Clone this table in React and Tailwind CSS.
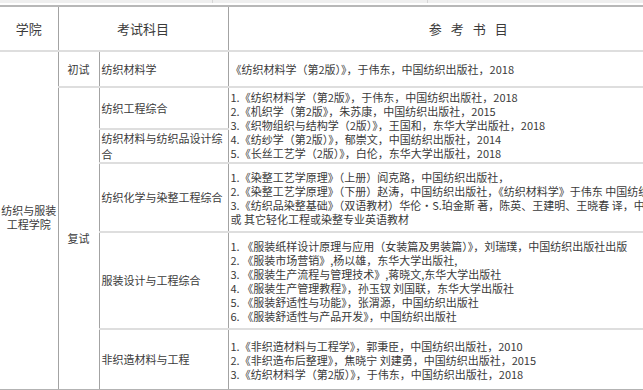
const font = { fontFamily: '"Noto Sans CJK SC", "Noto Sans", sans-serif' }

const refs = {
  first: ['《纺织材料学（第2版）》，于伟东，中国纺织出版社，2018'],
  textile: [
    '1.《纺织材料学（第2版》，于伟东，中国纺织出版社，2018',
    '2.《机织学（第2版》，朱苏康，中国纺织出版社，2015',
    '3.《织物组织与结构学（2版）》，王国和，东华大学出版社，2018',
    '4.《纺纱学（第2版）》，郁崇文，中国纺织出版社，2014',
    '5.《长丝工艺学（2版）》，白伦，东华大学出版社，2018',
  ],
  dyeing: [
    '1.《染整工艺学原理》（上册）阎克路，中国纺织出版社，',
    '2.《染整工艺学原理》（下册）赵涛，中国纺织出版社，《纺织材料学》于伟东 中国纺织出版社',
    '3.《纺织品染整基础》（双语教材）华伦·S.珀金斯 著，陈英、王建明、王晓春 译，中国纺织出版社',
    '或 其它轻化工程或染整专业英语教材',
  ],
  apparel: [
    '1. 《服装纸样设计原理与应用（女装篇及男装篇）》，刘瑞璞，中国纺织出版社出版',
    '2. 《服装市场营销》,杨以雄，东华大学出版社,',
    '3. 《服装生产流程与管理技术》,蒋晓文,东华大学出版社',
    '4. 《服装生产管理教程》，孙玉钗 刘国联，东华大学出版社',
    '5. 《服装舒适性与功能》，张渭源，中国纺织出版社',
    '6. 《服装舒适性与产品开发》，中国纺织出版社',
  ],
  nonwoven: [
    '1.《非织造材料与工程学》，郭秉臣，中国纺织出版社，2010',
    '2.《非织造布后整理》，焦晓宁 刘建勇，中国纺织出版社，2015',
    '3.《纺织材料学（第2版）》，于伟东，中国纺织出版社，2018',
  ],
}

function Lines({ items }) {
  return (
    <div className="px-[2px] leading-[14px]">
      {items.map((t, i) => (
        <div key={i} className="whitespace-nowrap">{t}</div>
      ))}
    </div>
  )
}

// cell borders
const v = 'border-r border-r-[#a3a3a3]'
const h = 'border-b-2 border-b-[#dedede]'
const last = 'border-b-2 border-b-[#b3b3b3]'

export default function App() {
  return (
    <div className="w-[643px] h-[390px] overflow-hidden bg-white text-[#3a3a3a] text-[11px]" style={font}>
      {/* tail of the row above */}
      <div className="flex h-[3px] bg-[#efefef]">
        <div className="w-[213px] border-r border-r-[#d6d6d6]"></div>
        <div className="w-[215px] border-r border-r-[#d6d6d6]"></div>
      </div>
      <table className="mt-[2px] w-[708px] table-fixed border-collapse">
        <colgroup>
          <col className="w-[58px]" />
          <col className="w-[41px]" />
          <col className="w-[129px]" />
          <col className="w-[480px]" />
        </colgroup>
        <tbody>
          <tr className="h-[45px] text-[13px]">
            <td className={`border-t-2 border-t-[#b8b8b8] ${h} ${v} text-center`}>学院</td>
            <td colSpan={2} className={`border-t-2 border-t-[#b8b8b8] ${h} ${v} text-center`}>考试科目</td>
            <td className={`border-t-2 border-t-[#b8b8b8] ${h}`}>
              <div className="flex justify-center gap-[9px]">
                <span>参</span><span>考</span><span>书</span><span>目</span>
              </div>
            </td>
          </tr>
          <tr className="h-[36px]">
            <td rowSpan={6} className={`${v} ${last} text-center leading-[14px] pb-[8px]`}>
              纺织与服装<br />工程学院
            </td>
            <td className={`${v} ${h} text-center`}>初试</td>
            <td className={`${v} ${h} px-[2px]`}>纺织材料学</td>
            <td className={h}><Lines items={refs.first} /></td>
          </tr>
          <tr className="h-[42px]">
            <td rowSpan={5} className={`${v} ${last} text-center`}>复试</td>
            <td className={`${v} ${h} px-[2px]`}>纺织工程综合</td>
            <td rowSpan={2} className={h}><Lines items={refs.textile} /></td>
          </tr>
          <tr className="h-[33px]">
            <td className={`${v} ${h} px-[2px] leading-[16px]`}>纺织材料与纺织品设计综合</td>
          </tr>
          <tr className="h-[69px]">
            <td className={`${v} ${h} px-[2px]`}>纺织化学与染整工程综合</td>
            <td className={h}><Lines items={refs.dyeing} /></td>
          </tr>
          <tr className="h-[97px]">
            <td className={`${v} ${h} px-[2px]`}>服装设计与工程综合</td>
            <td className={h}><Lines items={refs.apparel} /></td>
          </tr>
          <tr className="h-[61px]">
            <td className={`${v} ${last} px-[2px]`}>非织造材料与工程</td>
            <td className={last}><Lines items={refs.nonwoven} /></td>
          </tr>
        </tbody>
      </table>
    </div>
  )
}
